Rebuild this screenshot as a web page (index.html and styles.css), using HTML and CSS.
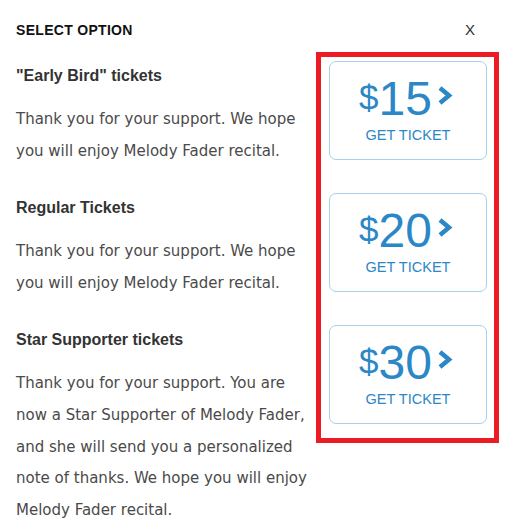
FILE: index.html
```html
<!DOCTYPE html>
<html lang="en">
<head>
<meta charset="utf-8">
<title>Select option</title>
<link rel="stylesheet" href="styles.css">
</head>
<body>
<div class="modal">
  <div class="header">
    <h1 class="title">SELECT OPTION</h1>
    <span class="close">X</span>
  </div>
  <div class="main">
    <div class="options">
      <section class="option">
        <h2 class="option-name">"Early Bird" tickets</h2>
        <p class="option-desc">Thank you for your support. We hope you will enjoy Melody Fader recital.</p>
      </section>
      <section class="option">
        <h2 class="option-name">Regular Tickets</h2>
        <p class="option-desc">Thank you for your support. We hope you will enjoy Melody Fader recital.</p>
      </section>
      <section class="option">
        <h2 class="option-name">Star Supporter tickets</h2>
        <p class="option-desc">Thank you for your support. You are now a Star Supporter of Melody Fader, and she will send you a personalized note of thanks. We hope you will enjoy Melody Fader recital.</p>
      </section>
    </div>
    <div class="tickets">
      <a class="ticket" href="#">
        <div class="price"><span class="currency">$</span>15<svg class="chev" width="16" height="21" viewBox="0 0 16 21"><polyline points="3,3 12,10.5 3,18" fill="none" stroke="currentColor" stroke-width="4.5"/></svg></div>
        <div class="cta">GET TICKET</div>
      </a>
      <a class="ticket" href="#">
        <div class="price"><span class="currency">$</span>20<svg class="chev" width="16" height="21" viewBox="0 0 16 21"><polyline points="3,3 12,10.5 3,18" fill="none" stroke="currentColor" stroke-width="4.5"/></svg></div>
        <div class="cta">GET TICKET</div>
      </a>
      <a class="ticket" href="#">
        <div class="price"><span class="currency">$</span>30<svg class="chev" width="16" height="21" viewBox="0 0 16 21"><polyline points="3,3 12,10.5 3,18" fill="none" stroke="currentColor" stroke-width="4.5"/></svg></div>
        <div class="cta">GET TICKET</div>
      </a>
    </div>
  </div>
</div>
</body>
</html>
```

FILE: styles.css
```css
html, body {
  margin: 0;
  padding: 0;
  background: #ffffff;
}

.modal {
  width: 506px;
  font-family: "Liberation Sans", Arial, sans-serif;
}

.header {
  display: flex;
  justify-content: space-between;
  align-items: flex-start;
  padding: 21px 31px 0 16px;
}

.title {
  margin: 1px 0 0 0;
  font-size: 14px;
  line-height: 16px;
  font-weight: bold;
  color: #111;
  letter-spacing: 0.3px;
}

.close {
  font-size: 15px;
  line-height: 17px;
  color: #333;
}

.main {
  display: flex;
  align-items: flex-start;
  margin-top: 14px;
  padding-left: 16px;
}

.options {
  width: 300px;
  flex-shrink: 0;
  padding-top: 15px;
}

.option {
  margin-bottom: 32px;
}

.option-name {
  margin: 0 0 19px 0;
  font-size: 16px;
  line-height: 18px;
  font-weight: bold;
  color: #333;
}

.option-desc {
  margin: 0;
  font-family: "DejaVu Sans", Verdana, sans-serif;
  font-size: 15px;
  line-height: 31.6px;
  color: #4a4a4a;
}

.tickets {
  width: 158px;
  flex-shrink: 0;
  border: 5px solid #ed1c24;
  padding: 4px 7px 14px 8px;
  display: flex;
  flex-direction: column;
  gap: 33px;
}

.ticket {
  display: block;
  box-sizing: border-box;
  height: 99px;
  border: 1px solid #a9d1ea;
  border-radius: 7px;
  padding-top: 13px;
  text-decoration: none;
  color: #2b87c6;
  text-align: center;
}

.price {
  font-size: 48px;
  line-height: 48px;
  height: 48px;
  white-space: nowrap;
  margin-left: -4px;
}

.currency {
  font-size: 35px;
  line-height: 1;
  vertical-align: 5px;
}

.chev {
  vertical-align: 9px;
  margin-left: 5px;
}

.cta {
  margin-top: 5px;
  font-size: 14.5px;
  line-height: 1;
}
```
